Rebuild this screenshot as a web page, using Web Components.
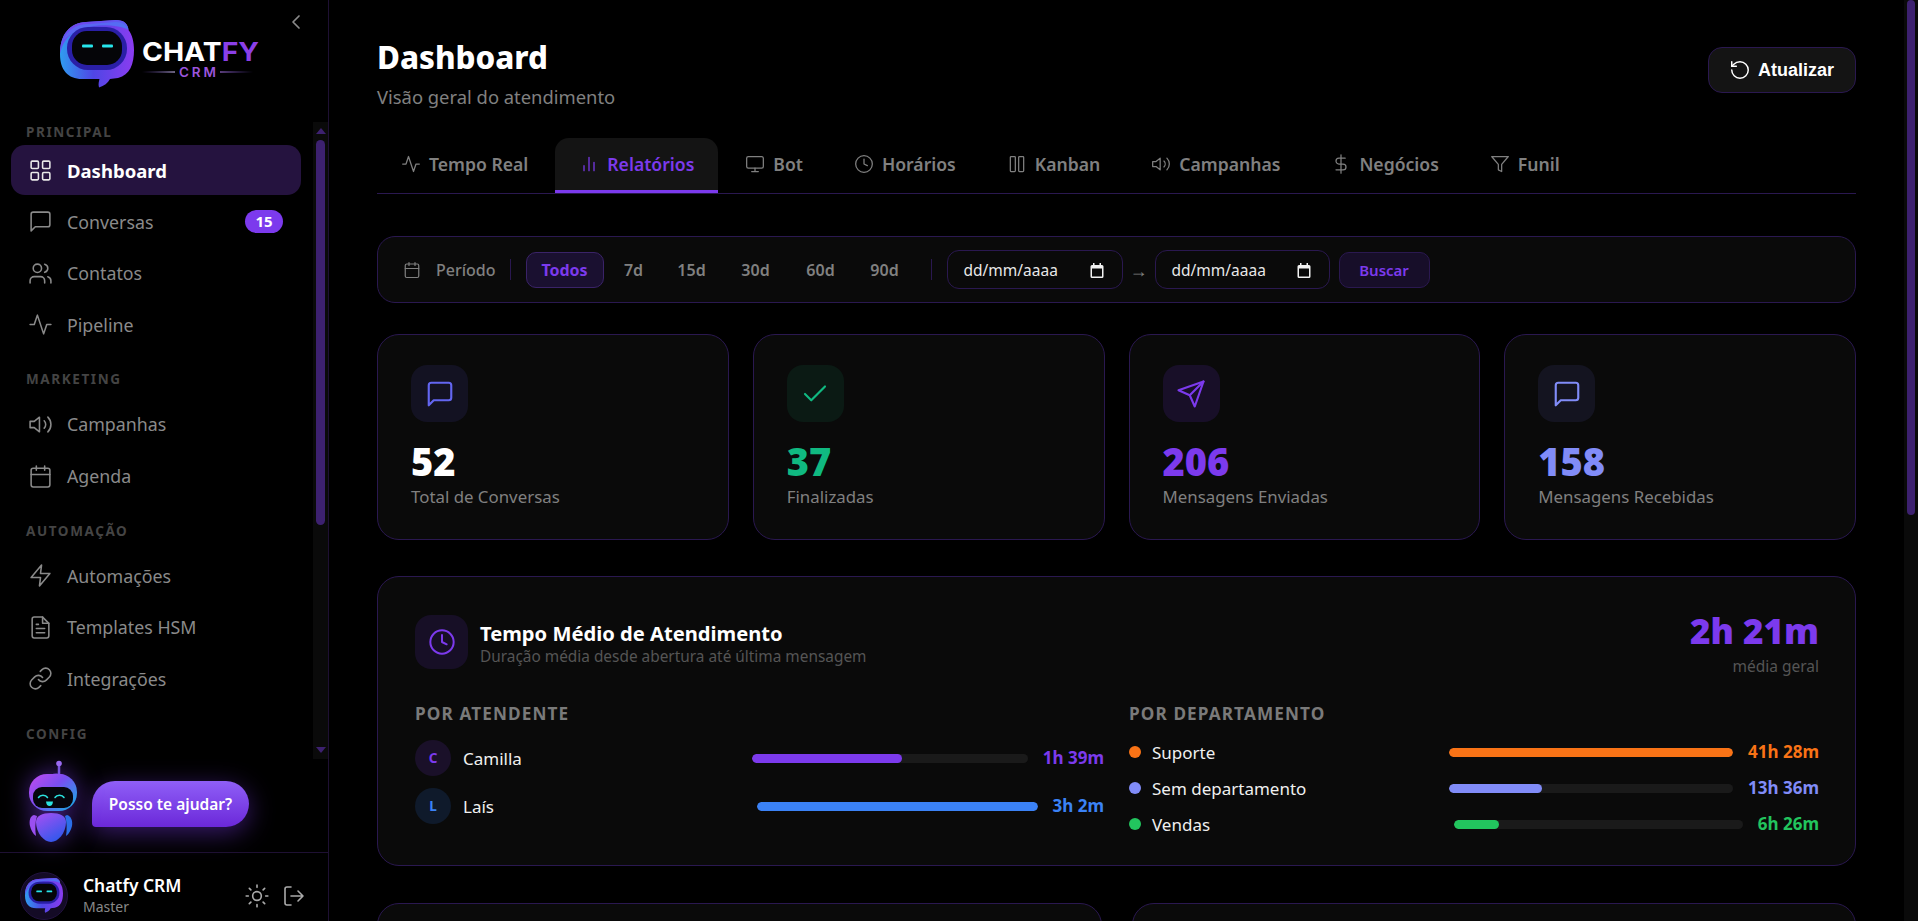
<!DOCTYPE html>
<html lang="pt-BR"><head><meta charset="utf-8"><title>Chatfy CRM</title>
<style>
html,body{margin:0;height:100%;background:#000;overflow:hidden}
body{font-family:"Noto Sans","Open Sans",sans-serif;color:#fff}
</style></head><body>
<app-shell>
  <app-sidebar slot="side">
    <side-section label="PRINCIPAL" first>
      <nav-item icon="grid" active>Dashboard</nav-item>
      <nav-item icon="message" badge="15">Conversas</nav-item>
      <nav-item icon="users">Contatos</nav-item>
      <nav-item icon="activity">Pipeline</nav-item>
    </side-section>
    <side-section label="MARKETING">
      <nav-item icon="volume">Campanhas</nav-item>
      <nav-item icon="calendar">Agenda</nav-item>
    </side-section>
    <side-section label="AUTOMAÇÃO">
      <nav-item icon="zap">Automações</nav-item>
      <nav-item icon="file">Templates HSM</nav-item>
      <nav-item icon="link">Integrações</nav-item>
    </side-section>
    <side-section label="CONFIG"></side-section>
  </app-sidebar>
  <page-head title="Dashboard" sub="Visão geral do atendimento"></page-head>
  <tab-bar>
    <tab-item icon="activity">Tempo Real</tab-item>
    <tab-item icon="bars" active>Relatórios</tab-item>
    <tab-item icon="monitor">Bot</tab-item>
    <tab-item icon="clock">Horários</tab-item>
    <tab-item icon="columns">Kanban</tab-item>
    <tab-item icon="volume">Campanhas</tab-item>
    <tab-item icon="dollar">Negócios</tab-item>
    <tab-item icon="filter">Funil</tab-item>
  </tab-bar>
  <filter-bar></filter-bar>
  <stat-grid>
    <stat-card icon="message" color="#6366f1" box="#131222" value="52" vcolor="#fff" label="Total de Conversas"></stat-card>
    <stat-card icon="check" color="#10b981" box="#0b1a14" value="37" vcolor="#10b981" label="Finalizadas"></stat-card>
    <stat-card icon="send" color="#7c3aed" box="#180f28" value="206" vcolor="#7c3aed" label="Mensagens Enviadas"></stat-card>
    <stat-card icon="message" color="#818cf8" box="#141420" value="158" vcolor="#818cf8" label="Mensagens Recebidas"></stat-card>
  </stat-grid>
  <time-card>
    <bar-row slot="left" avatar="C" tint="#1a1029" name="Camilla" value="1h 39m" color="#7c3aed" pct="54.5" a="7" b="6"></bar-row>
    <bar-row slot="left" avatar="L" tint="#0f1a2b" name="Laís" value="3h 2m" color="#3b82f6" pct="100" a="7" b="6"></bar-row>
    <bar-row slot="right" dot name="Suporte" value="41h 28m" color="#f97316" pct="100" a="14" b="13"></bar-row>
    <bar-row slot="right" dot name="Sem departamento" value="13h 36m" color="#818cf8" pct="32.7" a="14" b="13"></bar-row>
    <bar-row slot="right" dot name="Vendas" value="6h 26m" color="#22c55e" pct="15.5" a="14" b="13"></bar-row>
  </time-card>
  <lower-grid></lower-grid>
</app-shell>
<script>
const P={
grid:'<rect x="3" y="3" width="7" height="7" rx="1"/><rect x="14" y="3" width="7" height="7" rx="1"/><rect x="14" y="14" width="7" height="7" rx="1"/><rect x="3" y="14" width="7" height="7" rx="1"/>',
message:'<path d="M21 15a2 2 0 0 1-2 2H7l-4 4V5a2 2 0 0 1 2-2h14a2 2 0 0 1 2 2z"/>',
users:'<path d="M16 21v-2a4 4 0 0 0-4-4H6a4 4 0 0 0-4 4v2"/><circle cx="9" cy="7" r="4"/><path d="M22 21v-2a4 4 0 0 0-3-3.87"/><path d="M16 3.13a4 4 0 0 1 0 7.75"/>',
activity:'<path d="M22 12h-4l-3 9L9 3l-3 9H2"/>',
volume:'<path d="M11 5 6 9H2v6h4l5 4z"/><path d="M15.54 8.46a5 5 0 0 1 0 7.07"/><path d="M19.07 4.93a10 10 0 0 1 0 14.14"/>',
calendar:'<rect x="3" y="4" width="18" height="18" rx="2"/><path d="M16 2v4M8 2v4M3 10h18"/>',
zap:'<path d="M13 2 3 14h9l-1 8 10-12h-9z"/>',
file:'<path d="M14 2H6a2 2 0 0 0-2 2v16a2 2 0 0 0 2 2h12a2 2 0 0 0 2-2V8z"/><path d="M14 2v6h6M16 13H8M16 17H8M10 9H8"/>',
link:'<path d="M10 13a5 5 0 0 0 7.54.54l3-3a5 5 0 0 0-7.07-7.07l-1.72 1.71"/><path d="M14 11a5 5 0 0 0-7.54-.54l-3 3a5 5 0 0 0 7.07 7.07l1.71-1.71"/>',
chevron:'<path d="m15 18-6-6 6-6"/>',
bars:'<path d="M18 20V10M12 20V4M6 20v-6"/>',
monitor:'<rect x="2" y="3" width="20" height="14" rx="2"/><path d="M8 21h8M12 17v4"/>',
clock:'<circle cx="12" cy="12" r="10"/><path d="M12 6v6l4 2"/>',
columns:'<rect x="4" y="3" width="6" height="18" rx="1"/><rect x="14" y="3" width="6" height="18" rx="1"/>',
dollar:'<path d="M12 1v22M17 5H9.5a3.5 3.5 0 0 0 0 7h5a3.5 3.5 0 0 1 0 7H6"/>',
filter:'<path d="M22 3H2l8 9.46V19l4 2v-8.54z"/>',
rotate:'<path d="M3 12a9 9 0 1 0 9-9 9.75 9.75 0 0 0-6.74 2.74L3 8"/><path d="M3 3v5h5"/>',
check:'<path d="M20 6 9 17l-5-5"/>',
send:'<path d="M22 2 15 22l-4-9-9-4z"/><path d="M22 2 11 13"/>',
sun:'<circle cx="12" cy="12" r="4"/><path d="M12 2v2M12 20v2M4.93 4.93l1.41 1.41M17.66 17.66l1.41 1.41M2 12h2M20 12h2M6.34 17.66l-1.41 1.41M19.07 4.93l-1.41 1.41"/>',
logout:'<path d="M9 21H5a2 2 0 0 1-2-2V5a2 2 0 0 1 2-2h4"/><path d="m16 17 5-5-5-5M21 12H9"/>'
};
const ic=(n,s=20,w=1.7)=>`<svg width="${s}" height="${s}" viewBox="0 0 24 24" fill="none" stroke="currentColor" stroke-width="${w}" stroke-linecap="round" stroke-linejoin="round" style="display:block;flex:none">${P[n]}</svg>`;
const FONT='font-family:"Noto Sans","Open Sans",sans-serif;';
function def(name,render){
  customElements.define(name,class extends HTMLElement{
    connectedCallback(){
      if(this.shadowRoot)return;
      const a={};for(const x of this.attributes)a[x.name]=x.value;
      this.attachShadow({mode:'open'}).innerHTML=render(a);
    }
  });
}
let uid=0;
const markSvg=(w,h)=>{const u='m'+(++uid);return `<svg width="${w}" height="${h}" viewBox="0 0 74 68" style="display:block">
<defs><linearGradient id="${u}a" x1="0" y1="0" x2="1" y2="1"><stop offset="0" stop-color="#7c3aed"/><stop offset=".5" stop-color="#5b5cf0"/><stop offset="1" stop-color="#3b8cf0"/></linearGradient>
<linearGradient id="${u}c" x1="0" y1="0" x2="1" y2="0"><stop offset="0" stop-color="#2f9cf0"/><stop offset=".45" stop-color="#4f46e5"/><stop offset="1" stop-color="#8b3cf0"/></linearGradient></defs>
<path d="M39 67.500 C38 64 39 61 39.500 59 H22 C8 59 0 50 0 34 C0 14 10 3 26 2 L56 0 C64 0 68 4 68.500 10 C72 14 74 22 74 30 C74 44 70 55 58 58 L50 59 C48 63 44 66 39 67.500Z" fill="url(#${u}c)"/>
<path d="M0 34 C0 14 10 3 26 2 L56 0 C64 0 68 4 68.500 10 C60 5 40 4 26 7 C12 10 3 20 0 34Z" fill="url(#${u}a)"/>
<path d="M3 20 C10 6 20 4 30 4 L56 2 C62 2 66 5 68 9 C50 2 20 4 3 20Z" fill="#4f7cf5" opacity=".55"/>
<rect x="7" y="7" width="60" height="43" rx="21" fill="#2a1fa6"/>
<rect x="12" y="11" width="50" height="34" rx="15" fill="#050508"/>
<rect x="22" y="24.500" width="11" height="3" rx="1" fill="#27e6ec"/><rect x="42" y="24.500" width="11" height="3" rx="1" fill="#27e6ec"/>
</svg>`};
def('logo-mark',a=>`<style>:host{display:block}</style>${markSvg(a.w||74,a.h||68)}`);

def('chatfy-logo',()=>`<style>:host{display:flex;align-items:flex-start;gap:8px;width:204px}
svg.t{display:block;margin-top:18px;overflow:visible;flex:none}</style>
<logo-mark w="74" h="68"></logo-mark>
<svg class="t" width="122" height="50" viewBox="0 0 122 50">
<defs><linearGradient id="l1"><stop offset="0" stop-color="#8b5cf6" stop-opacity="0"/><stop offset="1" stop-color="#d8c8ff"/></linearGradient>
<linearGradient id="l2"><stop offset="0" stop-color="#b47cf5"/><stop offset="1" stop-color="#8b5cf6" stop-opacity="0"/></linearGradient></defs>
<text x="0" y="23" textLength="117" lengthAdjust="spacingAndGlyphs" font-family="Inter,'Noto Sans',sans-serif" font-weight="700" font-size="26" fill="#fff">CHAT<tspan fill="#8b3fe8">FY</tspan></text>
<text x="37" y="39" textLength="37" font-family="Inter,'Noto Sans',sans-serif" font-weight="600" font-size="13.500" fill="#9b55dc">CRM</text>
<rect x="0" y="33.500" width="33" height="1" fill="url(#l1)"/><rect x="78" y="33.500" width="33" height="1" fill="url(#l2)"/>
</svg>`);

def('fake-scrollbar',a=>`<style>:host{position:absolute;top:${a.top||0}px;right:0;width:${a.w||15}px;height:${a.h}px;background:#0a0a0a;display:block}
.t{position:absolute;left:${a.tl||3}px;right:${a.tr||3}px;top:${a.ts}px;height:${a.tb}px;background:#3d2170;border-radius:5px}
.u,.d{position:absolute;left:3px;width:0;height:0;border-left:5px solid transparent;border-right:5px solid transparent}
.u{top:6px;border-bottom:6px solid #3d2170}.d{bottom:6px;border-top:6px solid #3d2170}</style>
<div class="t"></div>${a.arrows!==undefined?'<div class="u"></div><div class="d"></div>':''}`);

def('side-section',a=>`<style>:host{display:block;margin-top:${a.first!==undefined?2:21.7}px}
.l{height:16px;line-height:16px;font-size:13.5px;font-weight:700;letter-spacing:1.6px;color:#444;padding-left:15px;margin-bottom:${a.first!==undefined?5:12}px;${FONT}}
.s{display:flex;flex-direction:column;gap:1.6px}</style>
<div class="l">${a.label}</div><div class="s"><slot></slot></div>`);

def('nav-item',a=>{const on=a.active!==undefined;return `<style>:host{display:flex;align-items:center;height:50px;box-sizing:border-box;padding:0 18px 0 17px;gap:14px;border-radius:14px;color:${on?'#fff':'#8a8a8a'};background:${on?'#25133f':'transparent'};font-size:${on?18.5:17.8}px;font-weight:${on?700:400};${FONT}}
.n{flex:1;white-space:nowrap}.i{color:${on?'#e8e8e8':'#8a8a8a'}}
.b{background:#7c3aed;color:#fff;font-size:15px;font-weight:700;height:23px;line-height:23px;width:38px;text-align:center;border-radius:12px}</style>
<span class="i">${ic(a.icon,25,1.5)}</span><span class="n"><slot></slot></span>${a.badge?`<span class="b">${a.badge}</span>`:''}`});

def('help-bot',()=>{const u='b'+(++uid);return `<style>:host{display:flex;align-items:center;height:93px;box-sizing:border-box;padding-left:25px;gap:11px}
svg{display:block;flex:none;align-self:flex-start;margin-top:1px;filter:drop-shadow(0 0 12px rgba(124,58,237,.55))}
.btn{width:157px;height:46px;line-height:46px;margin-top:-3px;text-align:center;color:#fff;font-size:15.5px;font-weight:600;background:linear-gradient(180deg,#8f5ff7,#6b28d9);border-radius:23px 23px 23px 4px;box-shadow:0 6px 26px rgba(124,58,237,.45);${FONT}}</style>
<svg width="56" height="84" viewBox="0 0 56 84">
<defs><linearGradient id="${u}h" x1="0" y1="0" x2="1" y2=".8"><stop offset="0" stop-color="#c44bef"/><stop offset=".5" stop-color="#7a4ef2"/><stop offset="1" stop-color="#1ea5e6"/></linearGradient>
<linearGradient id="${u}b" x1="0" y1="0" x2=".6" y2="1"><stop offset="0" stop-color="#a94ff3"/><stop offset="1" stop-color="#3358ec"/></linearGradient></defs>
<path d="M34 4v10" stroke="#7a55e0" stroke-width="2.500"/><circle cx="34" cy="3.500" r="2.800" fill="#9a6af0"/>
<path d="M22 17 Q28 11 40 15 L40 18 H22Z" fill="#7a4ef2"/>
<rect x="4" y="14" width="48" height="37" rx="18" fill="url(#${u}h)"/>
<rect x="8" y="27" width="40" height="21" rx="9" fill="#06060e"/>
<path d="M13.500 37.500a5 4 0 0 1 9 0M30 37.500a5 4 0 0 1 9 0" fill="none" stroke="#2be3e0" stroke-width="1.500" stroke-linecap="round"/>
<path d="M21 41.500h7q-.5 4.500-3.500 4.500t-3.500-4.500z" fill="#2be3e0"/>
<path d="M11 62c0-6 6-9 15-9s15 3 15 9c0 11-8 20-15 20S11 73 11 62z" fill="url(#${u}b)"/>
<path d="M9 55c-4 1-5 6-4 11 1 4 3 8 6 10-1-6-1-14 1-20z" fill="#9a4ff0"/>
<path d="M42 55c4 1 6 6 5 11-1 4-3 8-6 10 1-6 1-14-1-20z" fill="#2b6fe8"/>
</svg><div class="btn">Posso te ajudar?</div>`});

def('side-footer',()=>`<style>:host{flex:1;display:flex;align-items:center;border-top:1px solid #1e1033;padding:17px 22px 0 20px;gap:15px;${FONT}}
.av{width:48px;height:48px;border-radius:50%;background:#140b26;border:1px solid #22123f;box-sizing:border-box;display:flex;align-items:center;justify-content:center;flex:none}
.t{flex:1;line-height:1}.n{font-size:17.4px;font-weight:600;color:#fff;margin-bottom:5.5px}.r{font-size:14px;color:#888}
.i{color:#aaa}.row{display:flex;gap:12px;align-items:center}</style>
<div class="av"><logo-mark w="38" h="35"></logo-mark></div><div class="t"><div class="n">Chatfy CRM</div><div class="r">Master</div></div>
<div class="row"><span class="i">${ic('sun',26,1.5)}</span><span class="i">${ic('logout',24,1.6)}</span></div>`);

def('app-sidebar',()=>`<style>:host{position:relative;display:flex;flex-direction:column;width:329px;height:921px;flex:none;box-sizing:border-box;border-right:1px solid #1e1033;background:#000}
.h{height:122px;flex:none;box-sizing:border-box;display:flex;padding:20px 20px 0 60px;align-items:flex-start;justify-content:space-between}
.c{color:#8a8a8a;margin-top:-10px}
.nav{flex:none;height:637px;overflow:hidden;position:relative;box-sizing:border-box;padding-right:27px;padding-left:11px}
</style>
<div class="h"><chatfy-logo></chatfy-logo><span class="c">${ic('chevron',24,1.7)}</span></div>
<div class="nav"><slot></slot><fake-scrollbar h="637" ts="18" tb="385" arrows w="15"></fake-scrollbar></div>
<help-bot></help-bot><side-footer></side-footer>`);

def('page-head',a=>`<style>:host{display:flex;justify-content:space-between;align-items:flex-start;height:138px;box-sizing:border-box;padding-top:37px;${FONT}}
h1{margin:0;font-size:31.3px;line-height:40px;font-weight:800;color:#fff}
p{margin:8px 0 0;font-size:18.4px;line-height:24px;color:#808080}
.b{margin-top:10px;width:148px;height:46px;box-sizing:border-box;border:1px solid #2a1850;border-radius:14px;background:#141414;display:flex;align-items:center;justify-content:flex-start;padding-left:20px;gap:7px;color:#fff;font:700 18px "Liberation Sans",sans-serif}</style>
<div><h1>${a.title}</h1><p>${a.sub}</p></div><div class="b">${ic('rotate',22,1.6)}<span>Atualizar</span></div>`);

def('tab-bar',()=>`<style>:host{display:flex;gap:3px;height:56px;box-sizing:border-box;border-bottom:1px solid #2a1850}</style><slot></slot>`);
def('tab-item',a=>{const on=a.active!==undefined;return `<style>:host{display:flex;align-items:center;gap:8px;height:55px;box-sizing:border-box;padding:0 24px;border-radius:14px 14px 0 0;font-size:17.6px;font-weight:600;${FONT}color:${on?'#7c3aed':'#808080'};background:${on?'#141414':'transparent'};border-bottom:3px solid ${on?'#7c3aed':'transparent'};white-space:nowrap}</style>${ic(a.icon,20,1.5)}<slot></slot>`});

def('filter-bar',()=>`<style>:host{display:flex;align-items:center;height:67px;box-sizing:border-box;margin-top:42px;border:1px solid #2a1850;border-radius:18px;background:#0a0a0a;padding:0 0 0 25px;${FONT}color:#808080;font-size:16px}
.per{margin-left:15px;font-weight:500}.sep{width:1px;height:21px;background:#2a1850;margin:0 15px}
.p{height:36px;line-height:34px;box-sizing:border-box;text-align:center;font-weight:600;border:1px solid transparent;border-radius:10px}
.on{width:78px;color:#7c3aed;background:#1a1030;border-color:#3a2368;font-weight:700}
.d{width:176px;height:39px;box-sizing:border-box;border:1px solid #2a1850;border-radius:12px;background:#0a0a0a;color:#e8e8e8;display:flex;align-items:center;justify-content:space-between;padding:1px 18px 0 16px;font-size:15.5px}
.d svg{display:block}.ar{width:32px;text-align:center;font-size:18px;color:#808080;line-height:1}
.s{width:91px;height:36px;line-height:34px;box-sizing:border-box;margin-left:9px;border:1px solid #2a1850;border-radius:10px;background:#170e29;color:#7c3aed;text-align:center;font-weight:600;font-size:15px}</style>
${ic('calendar',18,1.6)}<span class="per">Período</span><span class="sep" style="margin-left:14px"></span>
<span class="p on">Todos</span><span class="p" style="width:60px">7d</span><span class="p" style="width:56px">15d</span><span class="p" style="width:72px">30d</span><span class="p" style="width:58px">60d</span><span class="p" style="width:70px">90d</span>
<span class="sep" style="margin-left:11px"></span>
<span class="d"><span>dd/mm/aaaa</span>${calIcon()}</span><span class="ar">→</span><span class="d" style="width:175px"><span>dd/mm/aaaa</span>${calIcon()}</span><span class="s">Buscar</span>`);
function calIcon(){return `<svg width="14" height="15" viewBox="0 0 14 15"><path d="M3 0h1.500v2h5V0H11v2h1a1.500 1.500 0 0 1 1.500 1.500v10A1.500 1.500 0 0 1 12 15H2a1.500 1.500 0 0 1-1.500-1.500v-10A1.500 1.500 0 0 1 2 2h1zM2 5.500v8h10v-8z" fill="#f2f2f2"/></svg>`}

def('stat-grid',()=>`<style>:host{display:grid;grid-template-columns:repeat(4,1fr);gap:24px;margin-top:31px}</style><slot></slot>`);
def('stat-card',a=>`<style>:host{display:block;height:206px;box-sizing:border-box;border:1px solid #2a1850;border-radius:22px;background:#0a0a0a;padding:30px 33px;${FONT}}
.i{width:57px;height:57px;border-radius:16px;background:${a.box};color:${a.color};display:flex;align-items:center;justify-content:center}
.v{font-size:38px;line-height:44px;font-weight:900;color:${a.vcolor};margin-top:17px}
.l{font-size:16.85px;line-height:24px;color:#808080;margin-top:2px}</style>
<div class="i">${ic(a.icon,30,1.7)}</div><div class="v">${a.value}</div><div class="l">${a.label}</div>`);

def('time-card',()=>`<style>:host{display:block;height:290px;box-sizing:border-box;margin-top:36px;border:1px solid #2a1850;border-radius:22px;background:#0a0a0a;padding:38px 36px 0 37px;${FONT}}
.top{display:flex;align-items:center;height:54px}.i{width:53px;height:54px;border-radius:16px;background:#170f26;color:#7c3aed;display:flex;align-items:center;justify-content:center;flex:none;margin-right:12px}
.tt{flex:1;padding-top:3px}.t{font-size:20.15px;line-height:26px;font-weight:700;color:#fff}.s{font-size:15.4px;line-height:20px;color:#555;margin-top:1px}
.big{text-align:right;margin-top:-1px}.v{font-size:35px;line-height:46px;font-weight:900;color:#7c3aed}.m{font-size:15.5px;line-height:18px;color:#555;margin-top:3px}
.cols{display:grid;grid-template-columns:689px 690px;gap:25px;margin-top:35px}
.h{font-size:17.2px;line-height:20px;font-weight:700;color:#7a7a7a;letter-spacing:1.1px;margin-bottom:16px}
.col{display:flex;flex-direction:column}.l{gap:12px}.r{gap:12px}</style>
<div class="top"><div class="i">${ic('clock',28,1.7)}</div><div class="tt"><div class="t">Tempo Médio de Atendimento</div><div class="s">Duração média desde abertura até última mensagem</div></div><div class="big"><div class="v">2h 21m</div><div class="m">média geral</div></div></div>
<div class="cols"><div><div class="h">POR ATENDENTE</div><div class="col l"><slot name="left"></slot></div></div><div><div class="h">POR DEPARTAMENTO</div><div class="col r"><slot name="right"></slot></div></div></div>`);

def('bar-row',a=>`<style>:host{display:flex;align-items:center;gap:15px;${FONT}}
.lab{flex:${a.a} 0 0;min-width:0;display:flex;align-items:center;gap:${a.avatar?12:11}px;color:#f0f0f0;font-size:17px;white-space:nowrap}
.av{width:36px;height:36px;border-radius:50%;background:${a.tint};color:${a.color};font-size:13.5px;font-weight:700;display:flex;align-items:center;justify-content:center;flex:none}
.dot{width:12px;height:12px;border-radius:50%;background:${a.color};flex:none}
.bar{flex:${a.b} 0 0;height:9px;border-radius:5px;background:#1a1a1a;overflow:hidden}
.f{height:100%;width:${a.pct}%;background:${a.color};border-radius:5px}
.val{font-size:17px;line-height:24px;font-weight:700;color:${a.color};white-space:nowrap}</style>
<div class="lab">${a.avatar?`<span class="av">${a.avatar}</span>`:'<span class="dot"></span>'}<span>${a.name}</span></div><div class="bar"><div class="f"></div></div><div class="val">${a.value}</div>`);

def('lower-grid',()=>`<style>:host{display:grid;grid-template-columns:1fr 1fr;gap:30px;margin-top:37px}
.c{height:320px;box-sizing:border-box;border:1px solid #2a1850;border-radius:22px;background:#0a0a0a}</style><div class="c"></div><div class="c"></div>`);

def('app-shell',()=>`<style>:host{display:flex;width:1918px;height:921px;overflow:hidden;position:relative;background:#000}
main{flex:1;min-width:0;box-sizing:border-box;padding:0 62px 0 48px;height:921px;overflow:hidden;position:relative}</style>
<slot name="side"></slot><main><slot></slot></main><fake-scrollbar h="921" w="14" ts="0" tb="515" tl="3" tr="3"></fake-scrollbar>`);
</script>
</body></html>
